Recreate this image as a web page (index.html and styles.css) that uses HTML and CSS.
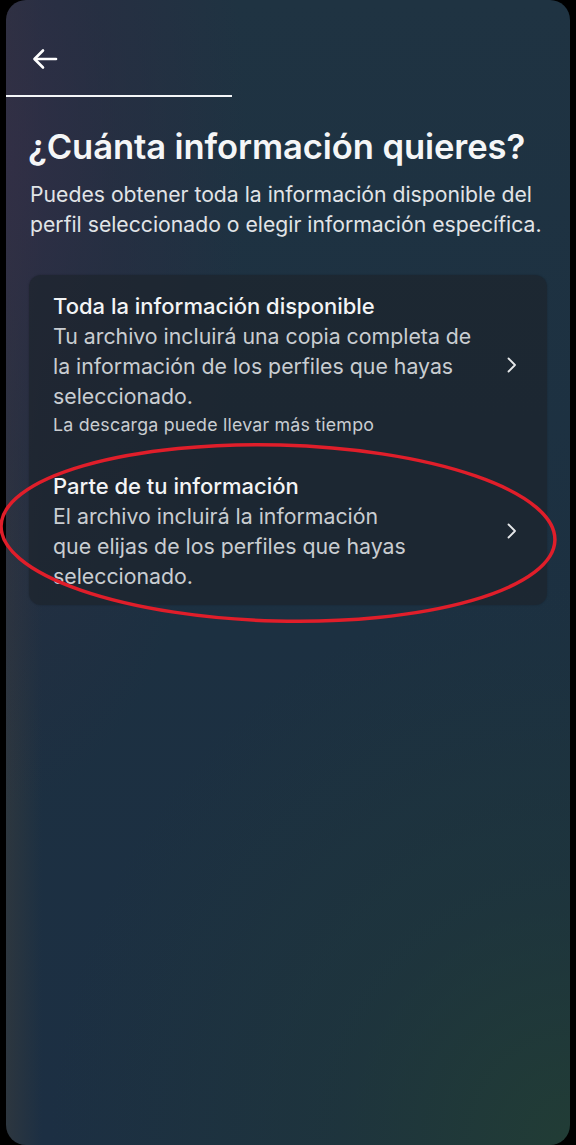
FILE: index.html
```html
<!DOCTYPE html>
<html lang="es">
<head>
<meta charset="utf-8">
<title>¿Cuánta información quieres?</title>
<link rel="stylesheet" href="styles.css">
</head>
<body>
<div class="screen">
  <header class="topbar">
    <button class="back" aria-label="Atrás">
      <svg width="26" height="22" viewBox="0 0 26 22" fill="none" stroke="#fff" stroke-width="2.6" stroke-linecap="round" stroke-linejoin="round">
        <path d="M24 11H3"/>
        <path d="M11 2.5L2.5 11L11 19.5"/>
      </svg>
    </button>
  </header>
  <div class="progress"><div class="progress-fill" style="width:40%"></div></div>

  <main class="content">
    <h1 class="title">¿Cuánta información quieres?</h1>
    <p class="lead">Puedes obtener toda la información disponible del perfil seleccionado o elegir información específica.</p>

    <div class="card">
      <div class="option option-first">
        <div class="option-text">
          <div class="option-title">Toda la información disponible</div>
          <div class="option-desc">Tu archivo incluirá una copia completa de<br>la información de los perfiles que hayas<br>seleccionado.</div>
          <div class="option-note">La descarga puede llevar más tiempo</div>
        </div>
        <svg class="chev" width="12" height="18" viewBox="0 0 12 18" fill="none" stroke="#e6e8ea" stroke-width="1.8" stroke-linecap="round" stroke-linejoin="round"><path d="M3.5 2.5l6.5 6.5-6.5 6.5"/></svg>
      </div>
      <div class="option option-last">
        <div class="option-text">
          <div class="option-title">Parte de tu información</div>
          <div class="option-desc">El archivo incluirá la información<br>que elijas de los perfiles que hayas<br>seleccionado.</div>
        </div>
        <svg class="chev" width="12" height="18" viewBox="0 0 12 18" fill="none" stroke="#e6e8ea" stroke-width="1.8" stroke-linecap="round" stroke-linejoin="round"><path d="M3.5 2.5l6.5 6.5-6.5 6.5"/></svg>
      </div>
    </div>
  </main>

  <svg class="annotation" width="576" height="700" viewBox="0 0 576 700" fill="none">
    <ellipse cx="278" cy="533" rx="277" ry="88" stroke="#e01e2a" stroke-width="3.5" transform="rotate(1.5 278 533)"/>
  </svg>
</div>
</body>
</html>
```

FILE: styles.css
```css
* { box-sizing: border-box; }

html, body {
  margin: 0;
  padding: 0;
  background: #000;
}

body {
  width: 576px;
  height: 1145px;
  overflow: hidden;
  font-family: "Inter", "Noto Sans", "Liberation Sans", sans-serif;
  position: relative;
}

.screen {
  margin: 0 6px 0 6px;
  height: 1145px;
  border-radius: 20px;
  overflow: hidden;
  background:
    radial-gradient(ellipse 240px 650px at 0 160px, rgba(50, 46, 70, 0.9) 0%, rgba(44, 44, 66, 0.55) 45%, rgba(30, 50, 66, 0) 100%),
    linear-gradient(90deg, rgba(62, 62, 60, 0.5) 0px, rgba(62, 62, 60, 0) 36px),
    radial-gradient(ellipse 520px 560px at 100% 100%, rgba(34, 62, 52, 0.9) 0%, rgba(32, 58, 54, 0.45) 45%, rgba(30, 50, 64, 0) 100%),
    linear-gradient(180deg, #1f3342 0%, #1c3041 55%, #1c2f43 100%);
}

.topbar {
  height: 95px;
  display: flex;
  align-items: flex-start;
  padding: 48px 0 0 26px;
}

.back {
  background: none;
  border: 0;
  padding: 0;
  margin: 0;
  display: block;
  width: 26px;
  height: 22px;
  cursor: pointer;
}

.progress {
  height: 2px;
  width: 100%;
}

.progress-fill {
  height: 2px;
  background: #f4f6f8;
}

.content {
  padding: 0 23px;
}

.title {
  margin: 28px 0 0 -1px;
  font-size: 34.6px;
  line-height: 42px;
  font-weight: 600;
  color: #f5f6f7;
  letter-spacing: -0.1px;
}

.lead {
  margin: 12px 0 0 1px;
  font-size: 21.2px;
  line-height: 30px;
  color: #e1e4e7;
  font-weight: 400;
}

.card {
  margin-top: 36px;
  border-radius: 12px;
  background: rgba(28, 36, 44, 0.7);
  box-shadow: 0 0 2px rgba(0, 0, 0, 0.25);
}

.option {
  display: flex;
  align-items: center;
  padding: 16px 30px 16px 24px;
}

.option-last {
  padding-top: 17px;
  padding-bottom: 14px;
}

.option-text {
  flex: 1;
}

.option-title {
  font-size: 22px;
  line-height: 30px;
  font-weight: 500;
  color: #f3f4f5;
}

.option-desc {
  font-size: 21.3px;
  line-height: 30px;
  color: #c9cdd1;
}

.option-note {
  margin-top: 1px;
  font-size: 17.8px;
  line-height: 26px;
  color: #c9cdd1;
  letter-spacing: 0.2px;
}

.chev {
  flex: none;
  display: block;
}

.annotation {
  position: absolute;
  left: 0;
  top: 0;
  pointer-events: none;
}
```
